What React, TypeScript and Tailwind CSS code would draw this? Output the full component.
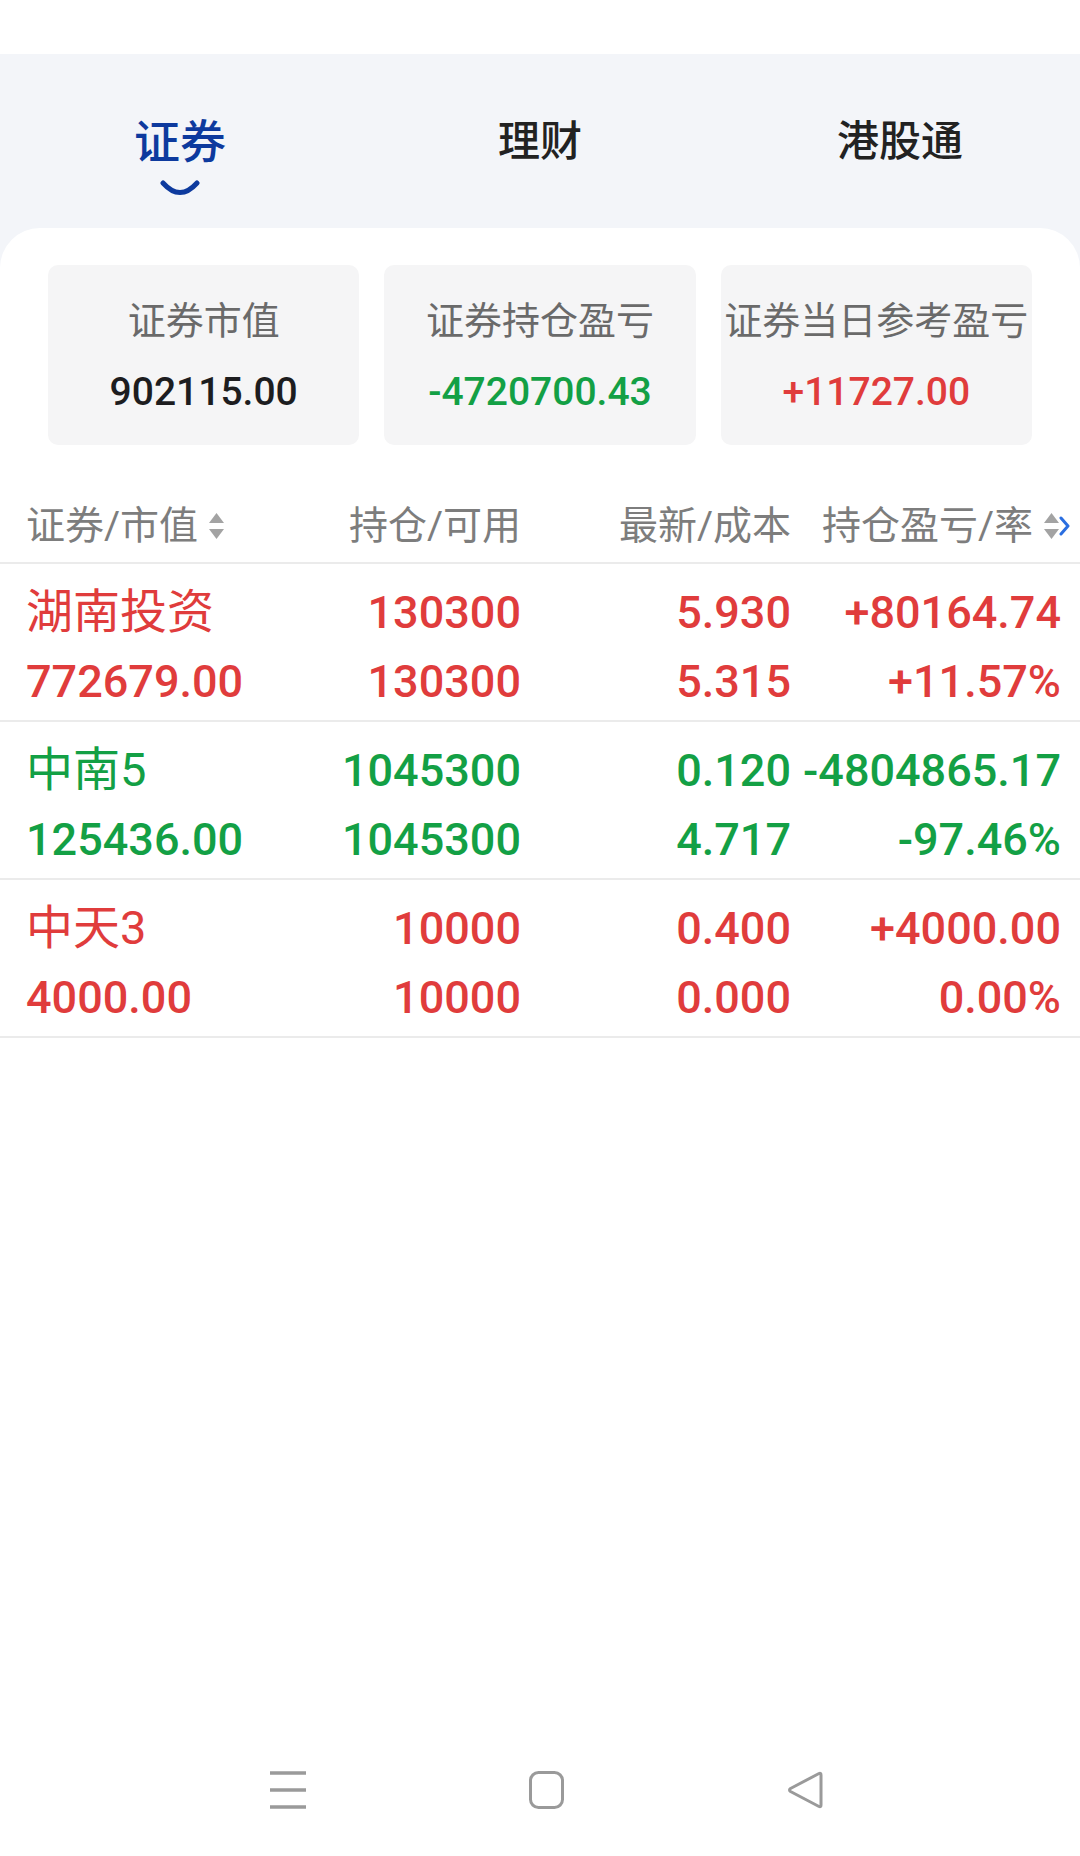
import React from "react"

const RED = "text-[#e03c3c]"
const GREEN = "text-[#13a045]"

type Row = {
  name: string
  value: string
  hold: string
  avail: string
  last: string
  cost: string
  pl: string
  rate: string
  up: boolean
}

const rows: Row[] = [
  { name: "湖南投资", value: "772679.00", hold: "130300", avail: "130300", last: "5.930", cost: "5.315", pl: "+80164.74", rate: "+11.57%", up: true },
  { name: "中南5", value: "125436.00", hold: "1045300", avail: "1045300", last: "0.120", cost: "4.717", pl: "-4804865.17", rate: "-97.46%", up: false },
  { name: "中天3", value: "4000.00", hold: "10000", avail: "10000", last: "0.400", cost: "0.000", pl: "+4000.00", rate: "0.00%", up: true },
]

function SortIcon() {
  return (
    <svg width="17" height="28" viewBox="0 0 17 28" className="shrink-0">
      <path d="M8.5 1 L16 11 L1 11 Z" fill="#a3a3a3" />
      <path d="M1 17 L16 17 L8.5 27 Z" fill="#a3a3a3" />
    </svg>
  )
}

function StatCard({ label, value, color }: { label: string; value: string; color: string }) {
  return (
    <div className="h-[180px] rounded-[10px] bg-[#f5f5f6] flex flex-col items-center pt-[34px]">
      <div className="text-[38px] leading-[44px] text-[#6a6a6a] whitespace-nowrap">{label}</div>
      <div className={`mt-[24px] text-[39px] leading-[50px] font-medium ${color}`}>{value}</div>
    </div>
  )
}

export default function App() {
  return (
    <div
      className="w-[1080px] h-[1856px] flex flex-col bg-white overflow-hidden"
      style={{ fontFamily: '"Roboto", "Noto Sans CJK SC", sans-serif' }}
    >
      {/* status bar area */}
      <div className="h-[54px] bg-white shrink-0" />

      <div className="flex-1 flex flex-col bg-[#f3f5f9]">
        {/* tabs */}
        <div className="h-[174px] grid grid-cols-3 items-start pt-[65px] shrink-0">
          <div className="flex flex-col items-center">
            <span className="text-[46px] leading-[46px] font-medium text-[#0d3a9e]">证券</span>
            <svg width="40" height="16" viewBox="0 0 40 16" className="mt-[15px]">
              <path d="M3 3 Q20 22 37 3" fill="none" stroke="#0d3a9e" strokeWidth="5" strokeLinecap="round" />
            </svg>
          </div>
          <div className="flex justify-center h-[46px] items-center">
            <span className="text-[42px] leading-[46px] font-medium text-[#222]">理财</span>
          </div>
          <div className="flex justify-center h-[46px] items-center">
            <span className="text-[42px] leading-[46px] font-medium text-[#222]">港股通</span>
          </div>
        </div>

        {/* main card */}
        <div className="flex-1 flex flex-col bg-white rounded-t-[40px]">
          <div className="grid grid-cols-3 gap-[25px] px-[48px] pt-[37px]">
            <StatCard label="证券市值" value="902115.00" color="text-[#1d1d1f]" />
            <StatCard label="证券持仓盈亏" value="-4720700.43" color={GREEN} />
            <StatCard label="证券当日参考盈亏" value="+11727.00" color={RED} />
          </div>

          {/* table header */}
          <div className="mt-[45px] h-[74px] border-b-2 border-[#ebebeb] grid grid-cols-[304px_191px_270px_270px] pl-[26px] items-center text-[39px] text-[#7d7d7d]">
            <div className="flex items-center gap-[10px]">
              <span>证券/市值</span>
              <SortIcon />
            </div>
            <div className="text-right">持仓/可用</div>
            <div className="text-right">最新/成本</div>
            <div className="flex items-center justify-end mr-[-9px]">
              <span>持仓盈亏/率</span>
              <span className="ml-[10px] flex items-center">
                <SortIcon />
                <svg width="11" height="20" viewBox="0 0 11 20" className="-ml-[1px]">
                  <path d="M2 2 L9 10 L2 18" fill="none" stroke="#2a6ee0" strokeWidth="3" strokeLinecap="round" strokeLinejoin="round" />
                </svg>
              </span>
            </div>
          </div>

          {/* rows */}
          {rows.map((r) => {
            const c = r.up ? RED : GREEN
            return (
              <div
                key={r.name}
                className={`h-[158px] border-b-2 border-[#ebebeb] grid grid-cols-[304px_191px_270px_270px] grid-rows-[69px_69px] pl-[26px] pt-[14px] text-[45px] ${c}`}
              >
                <div className="flex items-center text-[47px]">{r.name}</div>
                <div className="flex items-center justify-end font-medium">{r.hold}</div>
                <div className="flex items-center justify-end font-medium">{r.last}</div>
                <div className="flex items-center justify-end font-medium">{r.pl}</div>
                <div className="flex items-center font-medium">{r.value}</div>
                <div className="flex items-center justify-end font-medium">{r.avail}</div>
                <div className="flex items-center justify-end font-medium">{r.cost}</div>
                <div className="flex items-center justify-end font-medium">{r.rate}</div>
              </div>
            )
          })}

          <div className="flex-1" />

          {/* system nav bar */}
          <div className="h-[130px] pb-[2px] flex items-center pl-[270px] gap-[223px] shrink-0">
            <svg width="36" height="38" viewBox="0 0 36 38">
              <path d="M0 2 H36 M0 19 H36 M0 36 H36" stroke="#9a9a9a" strokeWidth="3.5" />
            </svg>
            <svg width="35" height="38" viewBox="0 0 35 38">
              <rect x="1.5" y="1.5" width="32" height="35" rx="8" fill="none" stroke="#9a9a9a" strokeWidth="3" />
            </svg>
            <svg width="36" height="38" viewBox="0 0 36 38">
              <path d="M32 2.5 Q34 1.5 34 4 V34 Q34 36.5 32 35.5 L3.5 20.5 Q1.5 19 3.5 17.5 Z" fill="none" stroke="#9a9a9a" strokeWidth="3" strokeLinejoin="round" />
            </svg>
          </div>
        </div>
      </div>
    </div>
  )
}
